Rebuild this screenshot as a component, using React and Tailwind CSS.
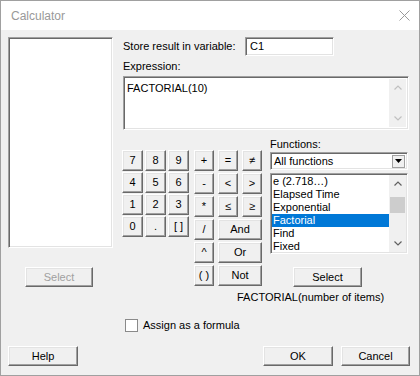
const raised =
  "border border-t-white border-l-white border-r-[#696969] border-b-[#696969] shadow-[inset_-1px_-1px_#a0a0a0,inset_1px_1px_#e3e3e3] bg-[#f0f0f0] flex items-center justify-center";
const sunken =
  "border border-t-[#a0a0a0] border-l-[#a0a0a0] border-r-white border-b-white shadow-[inset_1px_1px_#696969,inset_-1px_-1px_#e3e3e3] bg-white";

function Chevron({ up, color }) {
  return (
    <svg width="8" height="5" viewBox="0 0 8 5">
      <polyline
        points={up ? "0.5,4.5 4,1 7.5,4.5" : "0.5,0.5 4,4 7.5,0.5"}
        fill="none"
        stroke={color}
        strokeWidth="1.2"
      />
    </svg>
  );
}

function Key({ label, className = "" }) {
  return <div className={`${raised} h-[21px] ${className}`}>{label}</div>;
}

const numbers = ["7", "8", "9", "4", "5", "6", "1", "2", "3", "0", ".", "[ ]"];
const items = ["e (2.718…)", "Elapsed Time", "Exponential", "Factorial", "Find", "Fixed"];

export default function App() {
  return (
    <div className="w-[420px] h-[376px] bg-[#f0f0f0] border border-[#a0a0a0] flex flex-col font-['Liberation_Sans',Arial,sans-serif] text-[11px] text-black">
      <div className="h-[29px] bg-white flex items-center justify-between pl-[10px] pr-[9px]">
        <span className="text-[12px] text-[#999999]">Calculator</span>
        <svg width="11" height="11" viewBox="0 0 11 11">
          <path d="M0.5 0.5 L10.5 10.5 M10.5 0.5 L0.5 10.5" stroke="#9a9a9a" strokeWidth="1" />
        </svg>
      </div>

      <div className="flex pt-[7px]">
        <div className="ml-[7px] w-[105px] flex flex-col">
          <div className={`${sunken} h-[211px]`} />
          <div className={`${raised} mt-[19px] ml-[17px] w-[68px] h-[20px] text-[#a0a0a0]`}>Select</div>
        </div>

        <div className="ml-[10px] w-[286px] flex flex-col">
          <div className="flex items-center h-[19px]">
            <span className="w-[122px]">Store result in variable:</span>
            <div className={`${sunken} w-[89px] h-[19px] flex items-center pl-[4px]`}>C1</div>
          </div>
          <div className="h-[20px] flex items-center">Expression:</div>
          <div className={`${sunken} w-[286px] h-[54px] flex`}>
            <div className="flex-1 pl-[3px] pt-[3px]">FACTORIAL(10)</div>
            <div className="w-[17px] my-[2px] mr-[2px] bg-[#f0f0f0] flex flex-col justify-between items-center py-[6px]">
              <Chevron up color="#c0c0c0" />
              <Chevron color="#c0c0c0" />
            </div>
          </div>

          <div className="flex">
            <div className="flex mt-[20px] -ml-[1px]">
              <div className="grid grid-cols-[21px_21px_21px] gap-x-[2px] gap-y-[1px] content-start">
                {numbers.map((n) => (
                  <Key key={n} label={n} />
                ))}
              </div>
              <div className="grid grid-cols-[20px_20px_20px] gap-x-[4px] gap-y-[1px] ml-[5px]">
                <Key label="+" />
                <Key label="=" />
                <Key label="≠" />
                <Key label="-" />
                <Key label="<" />
                <Key label=">" />
                <Key label="*" />
                <Key label="≤" />
                <Key label="≥" />
                <Key label="/" />
                <Key label="And" className="col-span-2" />
                <Key label="^" />
                <Key label="Or" className="col-span-2" />
                <Key label="( )" />
                <Key label="Not" className="col-span-2" />
              </div>
            </div>

            <div className="ml-[8px] w-[138px] flex flex-col">
              <div className="mt-[6px] h-[16px] flex items-center">Functions:</div>
              <div className={`${sunken} h-[18px] flex items-center justify-between pl-[3px] pr-[2px]`}>
                <span>All functions</span>
                <div className="w-[13px] h-[13px] border border-[#a0a0a0] bg-[#f0f0f0] flex items-center justify-center">
                  <svg width="7" height="4" viewBox="0 0 7 4">
                    <polygon points="0,0 7,0 3.5,4" fill="#000" />
                  </svg>
                </div>
              </div>
              <div className={`${sunken} mt-[3px] h-[81px] flex`}>
                <div className="flex-1 pt-[1px] pl-[1px]">
                  {items.map((t) => (
                    <div
                      key={t}
                      className={`h-[13px] leading-[13px] pl-[1px] ${t === "Factorial" ? "bg-[#0078d7] text-white" : ""}`}
                    >
                      {t}
                    </div>
                  ))}
                </div>
                <div className="w-[17px] my-[1px] mr-[1px] bg-[#f0f0f0] flex flex-col items-center">
                  <div className="h-[17px] flex items-center justify-center">
                    <Chevron up color="#606060" />
                  </div>
                  <div className="mt-[5px] w-[15px] h-[16px] bg-[#cdcdcd]" />
                  <div className="flex-1" />
                  <div className="h-[17px] flex items-center justify-center">
                    <Chevron color="#606060" />
                  </div>
                </div>
              </div>
              <div className={`${raised} mt-[13px] ml-[23px] w-[69px] h-[20px]`}>Select</div>
            </div>
          </div>

          <div className="mt-[2px] h-[16px] flex items-center ml-[114px]">FACTORIAL(number of items)</div>
        </div>
      </div>

      <div className="mt-[14px] ml-[124px] flex items-center h-[13px]">
        <div className="w-[13px] h-[13px] border border-[#8a8a8a] bg-white" />
        <span className="ml-[5px]">Assign as a formula</span>
      </div>

      <div className="mt-[14px] flex">
        <div className={`${raised} ml-[7px] w-[70px] h-[20px]`}>Help</div>
        <div className={`${raised} ml-[185px] w-[70px] h-[20px]`}>OK</div>
        <div className={`${raised} ml-[8px] w-[69px] h-[20px]`}>Cancel</div>
      </div>
    </div>
  );
}
